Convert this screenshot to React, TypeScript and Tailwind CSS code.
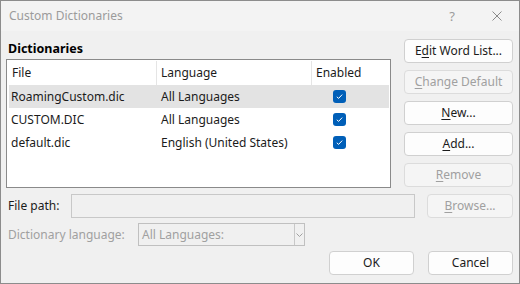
import React from "react";

const font = { fontFamily: '"Segoe UI", "Noto Sans", "Liberation Sans", sans-serif' };

type Btn = { pre: string; key?: string; post: string; disabled?: boolean };

const sideButtons: Btn[] = [
  { pre: "E", key: "d", post: "it Word List..." },
  { pre: "", key: "C", post: "hange Default", disabled: true },
  { pre: "", key: "N", post: "ew..." },
  { pre: "", key: "A", post: "dd..." },
  { pre: "", key: "R", post: "emove", disabled: true },
];

const rows = [
  { file: "RoamingCustom.dic", lang: "All Languages", selected: true },
  { file: "CUSTOM.DIC", lang: "All Languages" },
  { file: "default.dic", lang: "English (United States)" },
];

function Button({ b, className }: { b: Btn; className: string }) {
  return (
    <div
      className={`${className} h-[24px] flex items-center justify-center rounded-[4px] border text-[12px] ${
        b.disabled
          ? "border-[#dcdcdc] bg-[#f5f5f5] text-[#a0a0a0]"
          : "border-[#d0d0d0] bg-[#fdfdfd] text-[#1b1b1b]"
      }`}
    >
      <span>
        {b.pre}
        {b.key && <span className="underline underline-offset-2">{b.key}</span>}
        {b.post}
      </span>
    </div>
  );
}

function Check() {
  return (
    <div className="w-[13px] h-[13px] rounded-[3px] bg-[#005fb8] flex items-center justify-center">
      <svg width="9" height="9" viewBox="0 0 9 9">
        <polyline points="1.8,4.8 3.6,6.4 7.2,2.6" fill="none" stroke="#ffffff" strokeWidth="1" />
      </svg>
    </div>
  );
}

export default function App() {
  return (
    <div
      style={font}
      className="w-[520px] h-[284px] border border-[#8c8c8c] bg-[#f0f0f0] flex flex-col text-[12px] text-[#1b1b1b] leading-none"
    >
      {/* title bar */}
      <div className="h-[30px] flex items-center pl-[8px] shrink-0 bg-[#f3f3f3]">
        <span className="text-[#9b9b9b] text-[12px]">Custom Dictionaries</span>
        <div className="flex-1" />
        <span className="text-[#9b9b9b] text-[13px] mr-[37px]">?</span>
        <svg width="10" height="10" viewBox="0 0 10 10" className="mr-[17px]">
          <path d="M0.5 0.5 L9.5 9.5 M9.5 0.5 L0.5 9.5" stroke="#8a8a8a" strokeWidth="1" />
        </svg>
      </div>

      {/* dictionaries + side buttons */}
      <div className="flex pl-[5px] pr-[5px] pt-[8px]">
        <div className="w-[385px] flex flex-col">
          <div className="h-[20px] pl-[2px] flex items-center font-bold text-[12.5px] text-black">
            Dictionaries
          </div>
          <div className="h-[129px] border border-[#8a8a8a] bg-white p-[1px] flex flex-col">
            <div className="h-[24px] flex shrink-0">
              <div className="w-[149px] border-r border-[#e5e5e5] flex items-center pl-[4px]">File</div>
              <div className="w-[155px] border-r border-[#e5e5e5] flex items-center pl-[4px]">Language</div>
              <div className="flex-1 flex items-center pl-[4px]">Enabled</div>
            </div>
            {rows.map((r) => (
              <div
                key={r.file}
                className={`h-[23px] flex items-center ml-[1px] ${r.selected ? "bg-[#e3e3e3]" : ""}`}
              >
                <div className="w-[148px] pl-[2px]">{r.file}</div>
                <div className="w-[155px] pl-[4px]">{r.lang}</div>
                <div className="w-[54px] flex justify-center">
                  <Check />
                </div>
              </div>
            ))}
          </div>
        </div>
        <div className="ml-[13px] flex flex-col gap-[7px]">
          {sideButtons.map((b) => (
            <Button key={b.post} b={b} className="w-[109px]" />
          ))}
        </div>
      </div>

      {/* file path */}
      <div className="flex items-center pl-[7px] pr-[5px] mt-[6px]">
        <span className="w-[63px]">File path:</span>
        <div className="w-[344px] h-[24px] border border-[#c8c8c8] bg-[#f0f0f0]" />
        <Button b={{ pre: "", key: "B", post: "rowse...", disabled: true }} className="ml-[12px] w-[86px]" />
      </div>

      {/* dictionary language */}
      <div className="flex items-center pl-[7px] mt-[5px]">
        <span className="w-[130px] text-[#a0a0a0]">Dictionary language:</span>
        <div className="w-[167px] h-[23px] border border-[#c0c0c0] flex items-center">
          <span className="flex-1 pl-[3px] text-[#a0a0a0]">All Languages:</span>
          <div className="w-[10px] h-full border-l border-[#c8c8c8] flex items-center justify-center">
            <svg width="7" height="4" viewBox="0 0 7 4">
              <polyline points="0.5,0.5 3.5,3.5 6.5,0.5" fill="none" stroke="#a0a0a0" strokeWidth="1" />
            </svg>
          </div>
        </div>
      </div>

      {/* ok / cancel */}
      <div className="flex justify-end gap-[14px] pr-[6px] mt-[5px]">
        <Button b={{ pre: "OK", post: "" }} className="w-[85px]" />
        <Button b={{ pre: "Cancel", post: "" }} className="w-[85px]" />
      </div>
    </div>
  );
}
